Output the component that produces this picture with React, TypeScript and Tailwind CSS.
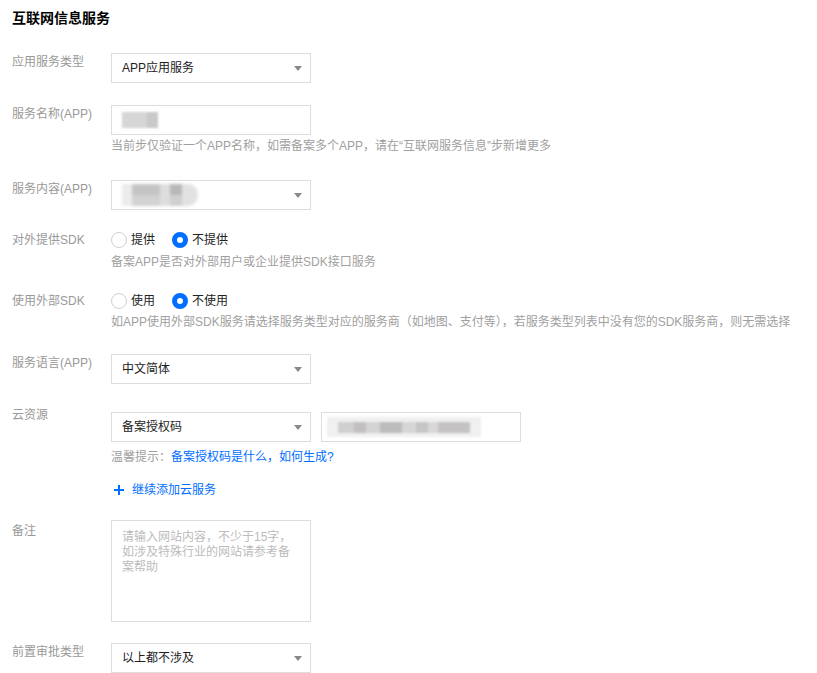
import React from "react";

function Arrow() {
  return (
    <svg width="8" height="5" viewBox="0 0 8 5" className="shrink-0">
      <path d="M0 0H8L4 5Z" fill="#888" />
    </svg>
  );
}

function Select({ children }: { children?: React.ReactNode }) {
  return (
    <div className="flex h-[30px] w-[200px] shrink-0 items-center justify-between border border-[#ddd] bg-white pl-[10px] pr-[8px] text-[12px] leading-[18px] text-[#222]">
      <div className="flex items-center">{children}</div>
      <Arrow />
    </div>
  );
}

function Label({ children, className = "" }: { children: React.ReactNode; className?: string }) {
  return (
    <div className={"w-[99px] shrink-0 text-[12px] leading-[18px] text-[#999] " + className}>{children}</div>
  );
}

function Radio({ checked, label }: { checked?: boolean; label: string }) {
  return (
    <div className="flex items-center gap-[4px]">
      <span
        className={
          checked
            ? "h-[16px] w-[16px] rounded-full border-[5px] border-[#006eff] bg-white"
            : "h-[16px] w-[16px] rounded-full border border-[#d0d0d0] bg-white"
        }
      />
      <span className="text-[12px] leading-[18px] text-[#222]">{label}</span>
    </div>
  );
}

function Help({ children, className = "" }: { children: React.ReactNode; className?: string }) {
  return <div className={"text-[12px] leading-[18px] text-[#a0a0a0] " + className}>{children}</div>;
}

export default function App() {
  return (
    <div className="min-h-[673px] w-[817px] bg-white pl-[12px] pt-[7px] font-['Liberation_Sans','Noto_Sans_CJK_SC',sans-serif]">
      <div className="text-[14px] font-bold leading-[22px] text-[#000]">互联网信息服务</div>

      {/* 应用服务类型 */}
      <div className="mt-[24px] flex">
        <Label>应用服务类型</Label>
        <Select>APP应用服务</Select>
      </div>

      {/* 服务名称 */}
      <div className="mt-[22px] flex">
        <Label>服务名称(APP)</Label>
        <div>
          <div className="flex h-[30px] w-[200px] items-center border border-[#ddd] bg-white pl-[10px]">
            <div className="flex h-[16px] blur-[1px]">
              <div className="h-[16px] w-[25px] bg-[#d6d6d6]" />
              <div className="h-[16px] w-[11px] bg-[#c9c9c9]" />
            </div>
          </div>
          <Help className="mt-[2px]">当前步仅验证一个APP名称，如需备案多个APP，请在“互联网服务信息”步新增更多</Help>
        </div>
      </div>

      {/* 服务内容 */}
      <div className="mt-[25px] flex">
        <Label>服务内容(APP)</Label>
        <Select>
          <div className="flex h-[24px] items-center blur-[1.5px]">
            <div className="h-[22px] w-[10px] bg-[#ececec]" />
            <div className="flex h-[22px] flex-col">
              <div className="h-[11px] w-[28px] bg-[#c4c4c4]" />
              <div className="h-[11px] w-[28px] bg-[#d2d2d2]" />
            </div>
            <div className="h-[22px] w-[10px] bg-[#dedede]" />
            <div className="flex h-[22px] flex-col">
              <div className="h-[11px] w-[12px] bg-[#b8b8b8]" />
              <div className="h-[11px] w-[12px] bg-[#cfcfcf]" />
            </div>
            <div className="h-[22px] w-[16px] rounded-r-[10px] bg-[#e2e2e2]" />
          </div>
        </Select>
      </div>

      {/* 对外提供SDK */}
      <div className="mt-[21px] flex">
        <Label>对外提供SDK</Label>
        <div>
          <div className="flex gap-[17px]">
            <Radio label="提供" />
            <Radio checked label="不提供" />
          </div>
          <Help className="mt-[4px]">备案APP是否对外部用户或企业提供SDK接口服务</Help>
        </div>
      </div>

      {/* 使用外部SDK */}
      <div className="mt-[21px] flex">
        <Label>使用外部SDK</Label>
        <div>
          <div className="flex gap-[17px]">
            <Radio label="使用" />
            <Radio checked label="不使用" />
          </div>
          <Help className="mt-[3px] whitespace-nowrap">
            如APP使用外部SDK服务请选择服务类型对应的服务商（如地图、支付等），若服务类型列表中没有您的SDK服务商，则无需选择
          </Help>
        </div>
      </div>

      {/* 服务语言 */}
      <div className="mt-[23px] flex">
        <Label>服务语言(APP)</Label>
        <Select>中文简体</Select>
      </div>

      {/* 云资源 */}
      <div className="mt-[28px] flex">
        <Label className="-mt-[6px]">云资源</Label>
        <div>
          <div className="flex gap-[10px]">
            <Select>备案授权码</Select>
            <div className="flex h-[30px] w-[200px] items-center border border-[#ddd] bg-white pl-[5px]">
              <div className="flex h-[20px] items-center bg-[#f0f0f0] px-[11px] blur-[1px]">
                <div className="h-[11px] w-[16px] bg-[#cfcfcf]" />
                <div className="h-[11px] w-[12px] bg-[#c2bfc0]" />
                <div className="h-[11px] w-[14px] bg-[#d4d4d4]" />
                <div className="h-[11px] w-[22px] bg-[#bcbcbc]" />
                <div className="h-[11px] w-[14px] bg-[#d6d6d6]" />
                <div className="h-[11px] w-[12px] bg-[#c6c6c6]" />
                <div className="h-[11px] w-[10px] bg-[#d8d8d8]" />
                <div className="h-[11px] w-[32px] bg-[#c4c2c3]" />
              </div>
            </div>
          </div>
          <div className="mt-[6px] text-[12px] leading-[18px] text-[#a0a0a0]">
            温馨提示：<span className="text-[#006eff]">备案授权码是什么，如何生成?</span>
          </div>
          <div className="mt-[15px] flex items-center text-[12px] leading-[18px] text-[#006eff]">
            <svg width="18" height="18" viewBox="0 0 18 18" className="mr-[3px] shrink-0">
              <path d="M3 8h10v2H3zM7 4h2v10H7z" fill="#006eff" />
            </svg>
            继续添加云服务
          </div>
        </div>
      </div>

      {/* 备注 */}
      <div className="mt-[21px] flex">
        <Label className="mt-[2px]">备注</Label>
        <div className="h-[102px] w-[200px] border border-[#ddd] bg-white px-[10px] pt-[9px] text-[12px] leading-[15px] text-[#bbb]">
          请输入网站内容，不少于15字，如涉及特殊行业的网站请参考备案帮助
        </div>
      </div>

      {/* 前置审批类型 */}
      <div className="mt-[21px] flex">
        <Label>前置审批类型</Label>
        <Select>以上都不涉及</Select>
      </div>
    </div>
  );
}
